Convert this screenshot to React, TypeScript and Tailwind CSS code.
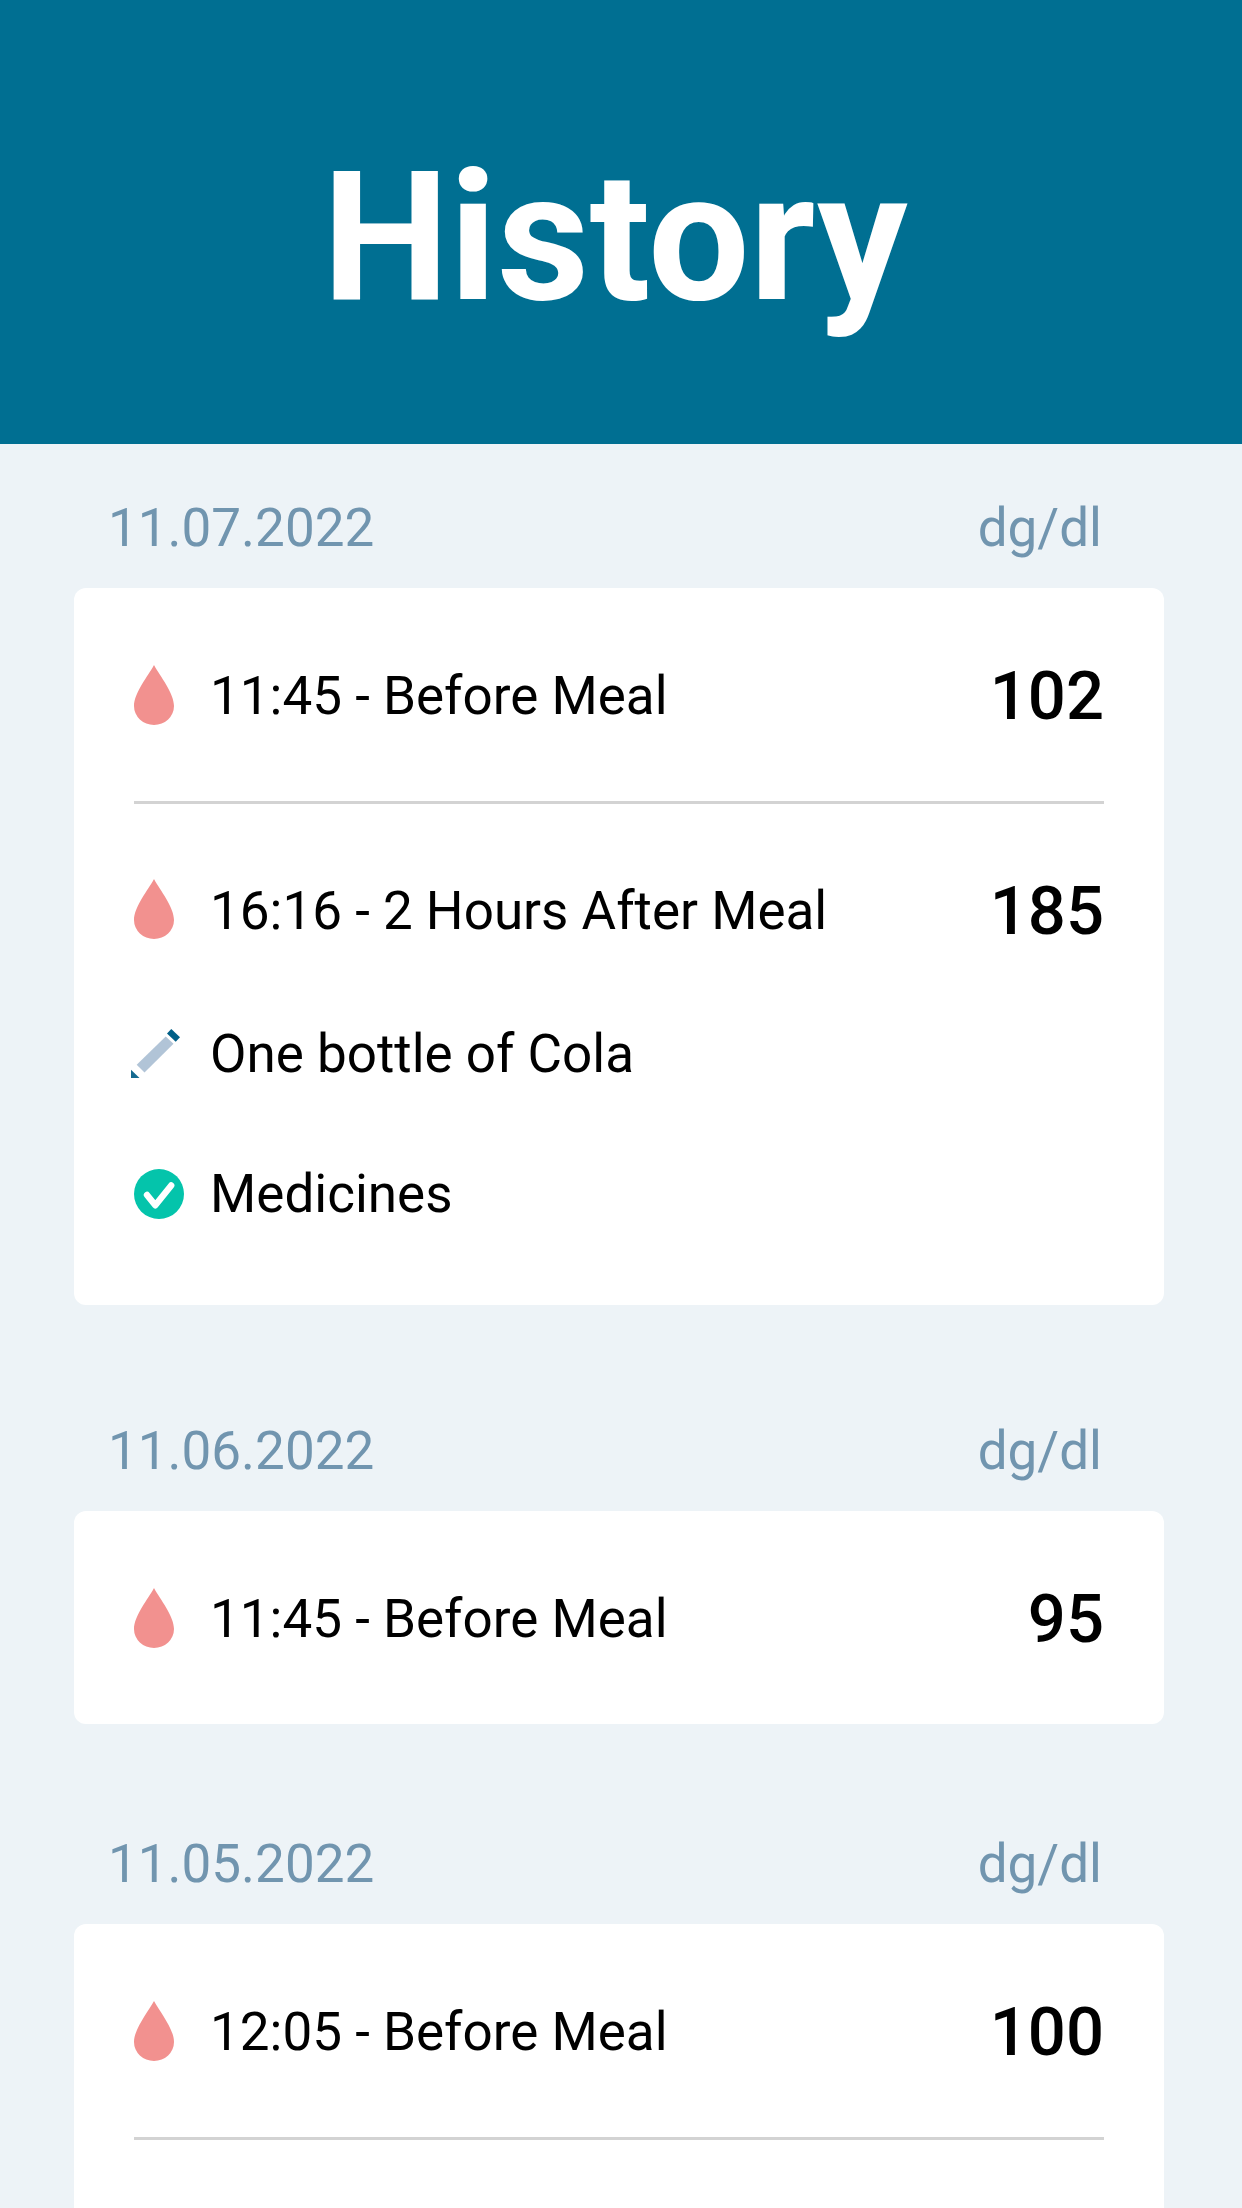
interface Entry {
  time: string
  label: string
  value: number
  note?: string
  medicines?: boolean
}

interface Day {
  date: string
  entries: Entry[]
  hasMore?: boolean
}

const days: Day[] = [
  {
    date: '11.07.2022',
    entries: [
      { time: '11:45', label: 'Before Meal', value: 102 },
      { time: '16:16', label: '2 Hours After Meal', value: 185, note: 'One bottle of Cola', medicines: true },
    ],
  },
  { date: '11.06.2022', entries: [{ time: '11:45', label: 'Before Meal', value: 95 }] },
  { date: '11.05.2022', entries: [{ time: '12:05', label: 'Before Meal', value: 100 }], hasMore: true },
]

function DropIcon() {
  return (
    <svg viewBox="0 0 40 60" className="h-[60px] w-10" fill="#f2918f" aria-hidden="true">
      <path d="M20 0C14 11 0 28 0 41a20 19 0 0 0 40 0C40 28 26 11 20 0Z" />
    </svg>
  )
}

function PencilIcon() {
  return (
    <svg viewBox="3 0 50 50" className="h-[50px] w-[50px] overflow-visible" aria-hidden="true">
      <path d="M34.7 7.5 42.5 14.8 13.5 43.5 5.7 35.7Z" fill="#b1c4d7" />
      <path d="M40.3 0 49 8.3 44.7 12.8 36 4.5Z" fill="#005f87" />
      <path d="M0 40.7V49h8.5Z" fill="#156a90" />
    </svg>
  )
}

function CheckIcon() {
  return (
    <svg viewBox="0 0 50 50" className="h-[50px] w-[50px]" aria-hidden="true">
      <circle cx="25" cy="25" r="25" fill="#04c4ab" />
      <path
        d="M13 26 21.3 36.3 37.2 16.5"
        fill="none"
        stroke="#fff"
        strokeWidth="6.4"
        strokeLinecap="round"
        strokeLinejoin="round"
      />
    </svg>
  )
}

function EntryRow({ entry }: { entry: Entry }) {
  return (
    <li className="group">
      <div className="flex h-[213px] items-center border-t-3 border-[#d3d3d3] group-first:border-t-0">
        <span className="w-[76px] shrink-0">
          <DropIcon />
        </span>
        <div className="flex flex-1 items-center justify-between pt-1 leading-none">
          <span>
            {entry.time} - {entry.label}
          </span>
          <strong className="text-[67px] leading-none font-medium">{entry.value}</strong>
        </div>
      </div>

      {(entry.note || entry.medicines) && (
        <div className="flex flex-col gap-[60px] pb-[71px] leading-[80px]">
          {entry.note && (
            <div className="flex items-center">
              <span className="w-[76px] shrink-0">
                <PencilIcon />
              </span>
              <span>{entry.note}</span>
            </div>
          )}
          {entry.medicines && (
            <div className="flex items-center">
              <span className="w-[76px] shrink-0">
                <CheckIcon />
              </span>
              <span>Medicines</span>
            </div>
          )}
        </div>
      )}
    </li>
  )
}

function DaySection({ day }: { day: Day }) {
  return (
    <section className="mb-14 first:mb-[62px]">
      <div className="flex justify-between pt-11 pr-[62px] pb-5 pl-[34px] leading-[80px] text-[#7195af]">
        <h2>{day.date}</h2>
        <span>dg/dl</span>
      </div>
      <ul className="rounded-xl bg-white px-[60px]">
        {day.entries.map((entry) => (
          <EntryRow key={entry.time} entry={entry} />
        ))}
        {day.hasMore && <li className="h-[213px] border-t-3 border-[#d3d3d3]" aria-hidden="true" />}
      </ul>
    </section>
  )
}

export default function App() {
  return (
    <div className="h-screen overflow-hidden bg-[#edf3f7] font-[Roboto,sans-serif] text-[53px] text-black">
      <header className="flex h-[444px] items-center justify-center bg-[#006f92] pt-8 pr-3">
        <h1 className="text-[180px] font-bold text-white">History</h1>
      </header>
      <main className="pr-[78px] pl-[74px]">
        {days.map((day) => (
          <DaySection key={day.date} day={day} />
        ))}
      </main>
    </div>
  )
}
